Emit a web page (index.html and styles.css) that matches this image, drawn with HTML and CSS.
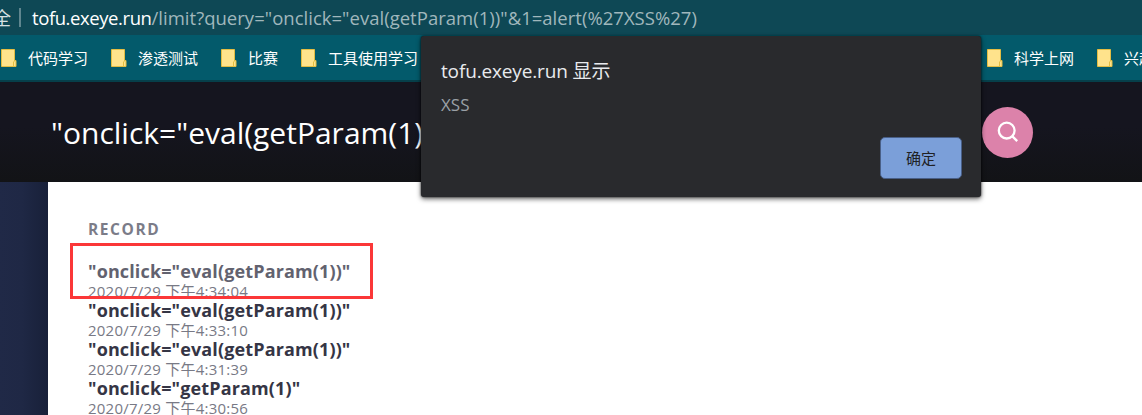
FILE: index.html
```html
<!DOCTYPE html>
<html lang="zh-CN">
<head>
<meta charset="utf-8">
<title>tofu.exeye.run</title>
<link rel="stylesheet" href="styles.css">
</head>
<body>
<svg class="defs" width="0" height="0"><symbol id="folder" viewBox="0 0 16 18"><path d="M.5.5h13v11h1.500v6H.5z" fill="#ffe38c" stroke="#e3bd43"/><path d="M12.500 17v-4l1.500-1.500" fill="none" stroke="#e3bd43"/></symbol></svg>
<div class="address"><span class="secure">全</span><i class="divider"></i><span class="host">tofu.exeye.run</span><span class="path">/limit?query="onclick="eval(getParam(1))"&amp;1=alert(%27XSS%27)</span></div>
<nav class="bookmarks">
<div class="group">
<a class="bookmark"><svg class="folder"><use href="#folder"/></svg>代码学习</a>
<a class="bookmark"><svg class="folder"><use href="#folder"/></svg>渗透测试</a>
<a class="bookmark"><svg class="folder"><use href="#folder"/></svg>比赛</a>
<a class="bookmark"><svg class="folder"><use href="#folder"/></svg>工具使用学习</a>
</div>
<div class="group right">
<a class="bookmark"><svg class="folder"><use href="#folder"/></svg>科学上网</a>
<a class="bookmark"><svg class="folder"><use href="#folder"/></svg>兴趣</a>
</div>
</nav>
<header class="header">
<div class="query">"onclick="eval(getParam(1)</div>
<button class="search" aria-label="Search"><svg width="22" height="22" viewBox="0 0 22 22" fill="none" stroke="#fff" stroke-width="2.300"><circle cx="9.700" cy="9.600" r="7.900"/><path d="M15.200 15.100l5 5"/></svg></button>
</header>
<main class="main">
<section class="panel">
<h2 class="heading">RECORD</h2>
<ul class="records">
<li class="record active"><b class="name">"onclick="eval(getParam(1))"</b><time class="time">2020/7/29 下午4:34:04</time></li>
<li class="record"><b class="name">"onclick="eval(getParam(1))"</b><time class="time">2020/7/29 下午4:33:10</time></li>
<li class="record"><b class="name">"onclick="eval(getParam(1))"</b><time class="time">2020/7/29 下午4:31:39</time></li>
<li class="record"><b class="name">"onclick="getParam(1)"</b><time class="time">2020/7/29 下午4:30:56</time></li>
</ul>
</section>
</main>
<div class="marker"></div>
<div class="dialog" role="dialog">
<div class="title"><span class="origin">tofu.exeye.run</span> 显示</div>
<div class="message">XSS</div>
<button class="ok">确定</button>
</div>
</body>
</html>
```
FILE: styles.css
```css
* { box-sizing: border-box; }
body { margin: 0; width: 1142px; height: 415px; overflow: hidden; display: flex; flex-direction: column; font-family: "Open Sans", "Noto Sans CJK SC", sans-serif; white-space: nowrap; }
.defs { position: absolute; }
.address { flex: none; height: 35px; display: flex; align-items: center; background: #0e4855; color: #a0b7bc; font-size: 18.5px; line-height: 34px; }
.secure { width: 19px; margin-left: -7px; font-size: 18px; color: #d5e0e2; }
.divider { width: 2px; height: 19px; margin: 0 11px 0 7px; background: #5f868f; }
.host { color: #fff; font-weight: 500; letter-spacing: -.42px; }
.path { letter-spacing: .02px; }
.bookmarks { flex: none; width: 1142px; height: 47px; overflow: hidden; display: flex; background: #035a6b; border-bottom: 2px solid #063f4a; color: #fff; font: 15px/45px "Noto Sans CJK SC", sans-serif; }
.group { flex: none; width: 985px; padding-left: 1px; display: flex; gap: 23px; }
.right { width: 157px; padding-left: 2px; overflow: hidden; }
.bookmark { display: flex; align-items: center; height: 45px; flex: none; }
.folder { width: 16px; height: 18px; margin-right: 11px; flex: none; }
.header { flex: none; height: 100px; padding-left: 51px; display: flex; align-items: center; background: linear-gradient(#15151f 45%, #121316); color: #fff; }
.query { width: 931px; padding-top: 1px; font-size: 30px; line-height: 40px; }
.search { width: 51px; height: 51px; padding: 0; border: 0; border-radius: 50%; background: #dc82aa; display: flex; align-items: center; justify-content: center; }
.main { flex: 1; padding-left: 48px; background: linear-gradient(90deg, #202947 0, #1f2845 22px, #182039 48px); }
.panel { height: 233px; padding: 36px 40px 0; background: #fff; overflow: hidden; }
.heading { margin: 0; font-size: 15.5px; line-height: 22px; letter-spacing: 1.6px; color: #7b7c88; }
.records { list-style: none; margin: 21px 0 0; padding: 0; }
.record { height: 39px; color: #353545; }
.active { color: #62626f; }
.name { display: block; font-size: 18px; line-height: 21px; letter-spacing: .13px; }
.time { display: block; font-size: 15px; line-height: 18px; letter-spacing: .23px; color: #787985; }
.marker { position: absolute; left: 70px; top: 243px; width: 303px; height: 56px; border: 3px solid #fb3738; }
.dialog { position: absolute; left: 421px; top: 36px; width: 560px; height: 161px; padding: 23px 19px 18px 20px; display: flex; flex-direction: column; background: #292a2d; border-radius: 3px; box-shadow: 0 2px 5px #0009, 0 0 2px #000c; color: #e8eaed; }
.title { font-size: 19px; line-height: 24px; }
.origin { font-weight: 500; letter-spacing: -.15px; }
.message { margin-top: 11px; font-size: 17px; line-height: 22px; color: #9aa0a6; }
.ok { align-self: flex-end; margin-top: auto; width: 82px; height: 42px; border: 1px solid #495f87; border-radius: 5px; background: #7b9fd9; color: #202124; font: 15px/20px "Noto Sans CJK SC", sans-serif; }
```
